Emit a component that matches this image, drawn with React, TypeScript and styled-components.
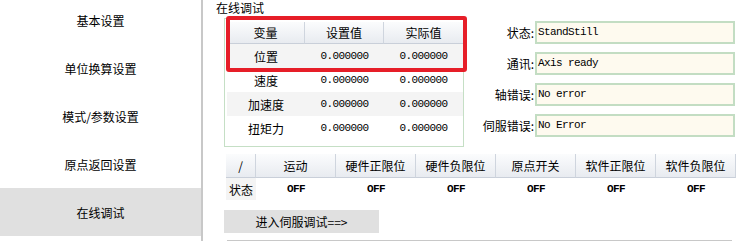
import { Fragment } from "react";
import styled, { createGlobalStyle } from "styled-components";

const GlobalStyle = createGlobalStyle`
  html, body {
    margin: 0;
    padding: 0;
    background: #ffffff;
  }
  body {
    font-family: "Noto Sans CJK SC", "Liberation Sans", sans-serif;
    font-size: 12px;
    color: #000000;
  }
`;

const Page = styled.div`
  display: flex;
  width: 755px;
  height: 241px;
  overflow: hidden;
`;

const Sidebar = styled.nav`
  width: 201px;
  flex-shrink: 0;
  border-right: 2px solid #c8c8c8;
`;

const NavList = styled.div`
  display: flex;
  flex-direction: column;
  margin-top: -4px;
`;

const NavItem = styled.div<{ $active?: boolean }>`
  height: 48px;
  display: flex;
  align-items: center;
  justify-content: center;
  font-size: 12px;
  background: ${(p) => (p.$active ? "#e0e0e0" : "transparent")};
`;

const Main = styled.main`
  flex: 1;
  padding-left: 13px;
  display: flex;
  flex-direction: column;
`;

const Title = styled.div`
  height: 13px;
  padding-top: 1px;
  line-height: 13px;
  font-size: 12px;
`;

const Content = styled.div`
  margin-left: 8px;
  display: flex;
  flex-direction: column;
`;

const TopRow = styled.div`
  display: flex;
  margin-top: 4px;
`;

const VarBox = styled.div`
  position: relative;
  width: 240px;
  height: 129px;
  box-sizing: border-box;
  border: 1px solid #c5dfc5;
  padding: 3px 2px 0 2px;
`;

const VarGrid = styled.div`
  display: grid;
  grid-template-columns: 78px 79px 79px;
`;

const HeadCell = styled.div<{ $last?: boolean; $h?: number }>`
  height: ${(p) => p.$h ?? 22}px;
  box-sizing: border-box;
  display: flex;
  align-items: center;
  justify-content: center;
  background: linear-gradient(#fbfcfd, #e8ebf0);
  border-bottom: 1px solid #c9cfd9;
  border-right: ${(p) => (p.$last ? "none" : "1px solid #cfd5de")};
  font-size: 12px;
  white-space: nowrap;
`;

const Cell = styled.div<{ $alt?: boolean; $mono?: boolean }>`
  height: 24px;
  display: flex;
  align-items: center;
  justify-content: center;
  background: ${(p) => (p.$alt ? "#f4f4f4" : "#ffffff")};
  font-family: ${(p) =>
    p.$mono ? `"Liberation Mono", monospace` : `"Noto Sans CJK SC", sans-serif`};
  font-size: ${(p) => (p.$mono ? "11px" : "12px")};
  letter-spacing: ${(p) => (p.$mono ? "-0.6px" : "normal")};
`;

const Highlight = styled.div`
  position: absolute;
  left: 1px;
  top: -3px;
  width: 241px;
  height: 56px;
  box-sizing: border-box;
  border: 4px solid #e61e28;
  border-radius: 3px;
  pointer-events: none;
`;

const StatusPanel = styled.div`
  display: grid;
  grid-template-columns: 71px 200px;
  row-gap: 8px;
  margin-top: 3px;
  align-self: flex-start;
`;

const Label = styled.div`
  height: 23px;
  line-height: 23px;
  text-align: right;
  padding-right: 1px;
  font-size: 12px;
  white-space: nowrap;
`;

const Field = styled.div`
  height: 23px;
  box-sizing: border-box;
  border: 2px solid #c3ddc3;
  background: #fefaef;
  padding-left: 1px;
  line-height: 19px;
  font-family: "Liberation Mono", monospace;
  font-size: 11px;
  letter-spacing: -0.6px;
`;

const IoGrid = styled.div`
  display: grid;
  grid-template-columns: 30px repeat(6, 80px);
  margin-top: 7px;
  margin-left: 2px;
`;

const StateCell = styled.div<{ $label?: boolean }>`
  height: 22px;
  display: flex;
  align-items: center;
  justify-content: center;
  background: ${(p) => (p.$label ? "#f4f4f4" : "#ffffff")};
  font-family: ${(p) =>
    p.$label ? `"Noto Sans CJK SC", sans-serif` : `"Liberation Mono", monospace`};
  font-size: ${(p) => (p.$label ? "12px" : "11px")};
  letter-spacing: ${(p) => (p.$label ? "normal" : "-0.6px")};
  font-weight: ${(p) => (p.$label ? 400 : 700)};
`;

const ServoButton = styled.button`
  margin-top: 10px;
  width: 155px;
  height: 23px;
  border: none;
  padding: 0;
  background: #e0e0e0;
  font-family: "Noto Sans CJK SC", sans-serif;
  font-size: 12px;
  color: #000000;
`;

const BottomLine = styled.div`
  margin-top: 7px;
  margin-left: 3px;
  width: 505px;
  border-top: 1px solid #c8c8c8;
`;

const navItems = ["基本设置", "单位换算设置", "模式/参数设置", "原点返回设置", "在线调试"];

const vars = [
  { name: "位置", set: "0.000000", actual: "0.000000" },
  { name: "速度", set: "0.000000", actual: "0.000000" },
  { name: "加速度", set: "0.000000", actual: "0.000000" },
  { name: "扭矩力", set: "0.000000", actual: "0.000000" },
];

const status = [
  { label: "状态:", value: "StandStill" },
  { label: "通讯:", value: "Axis ready" },
  { label: "轴错误:", value: "No error" },
  { label: "伺服错误:", value: "No Error" },
];

const ioCols = ["运动", "硬件正限位", "硬件负限位", "原点开关", "软件正限位", "软件负限位"];

export default function App() {
  return (
    <>
      <GlobalStyle />
      <Page>
        <Sidebar>
          <NavList>
            {navItems.map((item, i) => (
              <NavItem key={item} $active={i === navItems.length - 1}>
                {item}
              </NavItem>
            ))}
          </NavList>
        </Sidebar>
        <Main>
          <Title>在线调试</Title>
          <Content>
            <TopRow>
              <VarBox>
                <VarGrid>
                  <HeadCell>变量</HeadCell>
                  <HeadCell>设置值</HeadCell>
                  <HeadCell $last>实际值</HeadCell>
                  {vars.map((v, i) => (
                    <Fragment key={v.name}>
                      <Cell $alt={i % 2 === 0}>{v.name}</Cell>
                      <Cell $alt={i % 2 === 0} $mono>
                        {v.set}
                      </Cell>
                      <Cell $alt={i % 2 === 0} $mono>
                        {v.actual}
                      </Cell>
                    </Fragment>
                  ))}
                </VarGrid>
                <Highlight />
              </VarBox>
              <StatusPanel>
                {status.map((s) => (
                  <Fragment key={s.label}>
                    <Label>{s.label}</Label>
                    <Field>{s.value}</Field>
                  </Fragment>
                ))}
              </StatusPanel>
            </TopRow>
            <IoGrid>
              <HeadCell $h={24}>/</HeadCell>
              {ioCols.map((c) => (
                <HeadCell key={c} $h={24}>
                  {c}
                </HeadCell>
              ))}
              <StateCell $label>状态</StateCell>
              {ioCols.map((c) => (
                <StateCell key={c}>OFF</StateCell>
              ))}
            </IoGrid>
            <div>
              <ServoButton>进入伺服调试==&gt;</ServoButton>
            </div>
            <BottomLine />
          </Content>
        </Main>
      </Page>
    </>
  );
}
